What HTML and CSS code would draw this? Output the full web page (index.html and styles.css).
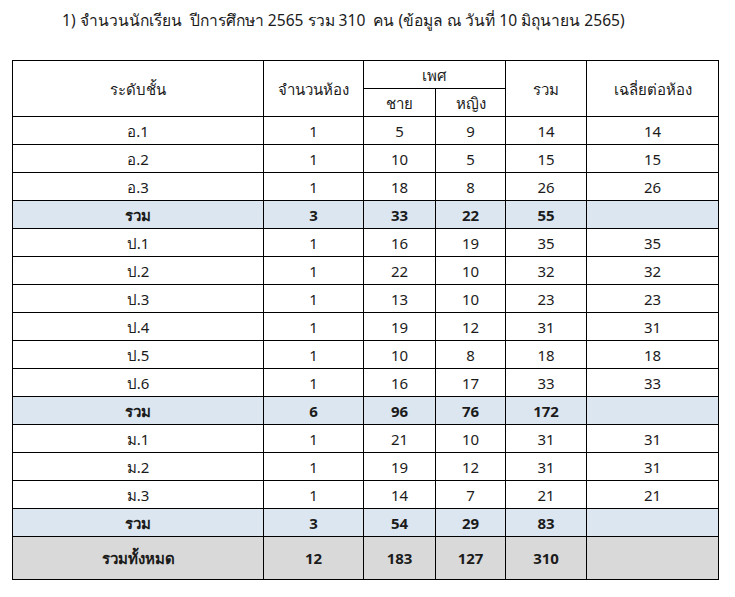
FILE: index.html
```html
<!DOCTYPE html>
<html lang="th">
<head>
<meta charset="utf-8">
<link rel="stylesheet" href="styles.css">
</head>
<body>
<div class="page">
  <h1 class="title">1) จำนวนนักเรียน&nbsp; ปีการศึกษา 2565 รวม 310&nbsp; คน (ข้อมูล ณ วันที่ 10 มิถุนายน 2565)</h1>
  <table class="stats">
    <colgroup>
      <col class="c-level"><col class="c-rooms"><col class="c-male"><col class="c-female"><col class="c-sum"><col class="c-avg">
    </colgroup>
    <thead>
      <tr class="h1">
        <th rowspan="2">ระดับชั้น</th>
        <th rowspan="2">จำนวนห้อง</th>
        <th colspan="2">เพศ</th>
        <th rowspan="2">รวม</th>
        <th rowspan="2">เฉลี่ยต่อห้อง</th>
      </tr>
      <tr class="h2">
        <th>ชาย</th>
        <th>หญิง</th>
      </tr>
    </thead>
    <tbody>
      <tr><td>อ.1</td><td>1</td><td>5</td><td>9</td><td>14</td><td>14</td></tr>
      <tr><td>อ.2</td><td>1</td><td>10</td><td>5</td><td>15</td><td>15</td></tr>
      <tr><td>อ.3</td><td>1</td><td>18</td><td>8</td><td>26</td><td>26</td></tr>
      <tr class="sub"><td>รวม</td><td>3</td><td>33</td><td>22</td><td>55</td><td></td></tr>
      <tr><td>ป.1</td><td>1</td><td>16</td><td>19</td><td>35</td><td>35</td></tr>
      <tr><td>ป.2</td><td>1</td><td>22</td><td>10</td><td>32</td><td>32</td></tr>
      <tr><td>ป.3</td><td>1</td><td>13</td><td>10</td><td>23</td><td>23</td></tr>
      <tr><td>ป.4</td><td>1</td><td>19</td><td>12</td><td>31</td><td>31</td></tr>
      <tr><td>ป.5</td><td>1</td><td>10</td><td>8</td><td>18</td><td>18</td></tr>
      <tr><td>ป.6</td><td>1</td><td>16</td><td>17</td><td>33</td><td>33</td></tr>
      <tr class="sub"><td>รวม</td><td>6</td><td>96</td><td>76</td><td>172</td><td></td></tr>
      <tr><td>ม.1</td><td>1</td><td>21</td><td>10</td><td>31</td><td>31</td></tr>
      <tr><td>ม.2</td><td>1</td><td>19</td><td>12</td><td>31</td><td>31</td></tr>
      <tr><td>ม.3</td><td>1</td><td>14</td><td>7</td><td>21</td><td>21</td></tr>
      <tr class="sub"><td>รวม</td><td>3</td><td>54</td><td>29</td><td>83</td><td></td></tr>
      <tr class="total"><td>รวมทั้งหมด</td><td>12</td><td>183</td><td>127</td><td>310</td><td></td></tr>
    </tbody>
  </table>
</div>
</body>
</html>
```
FILE: styles.css
```css
html, body {
  margin: 0;
  padding: 0;
  background: #ffffff;
}
body {
  font-family: "Noto Sans", "DejaVu Sans", sans-serif;
  color: #1b1b1b;
}
.page {
  padding: 0 0 0 12px;
}
.title {
  margin: 0;
  padding: 8px 0 0 50px;
  height: 60px;
  box-sizing: border-box;
  font-size: 15.6px;
  font-weight: normal;
  line-height: 24px;
}
.stats {
  border-collapse: collapse;
  table-layout: fixed;
  width: 706px;
  font-size: 15px;
}
.c-level { width: 251px; }
.c-rooms { width: 100px; }
.c-male { width: 72px; }
.c-female { width: 70px; }
.c-sum { width: 81px; }
.c-avg { width: 132px; }
.stats th, .stats td {
  border: 1px solid #000;
  text-align: center;
  vertical-align: middle;
  padding: 0;
  font-weight: normal;
  line-height: 18px;
}
.stats thead tr { height: 28px; }
.stats tbody tr { height: 28px; }
.stats tr.sub td {
  background: #dce6f1;
  font-weight: bold;
}
.stats tr.total { height: 43px; }
.stats tr.total td {
  background: #d9d9d9;
  font-weight: bold;
}
```
